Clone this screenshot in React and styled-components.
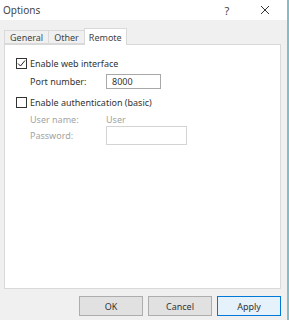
import React from 'react';
import styled, { createGlobalStyle } from 'styled-components';

const Global = createGlobalStyle`
  html, body {
    margin: 0;
    padding: 0;
    background: #f0f0f0;
  }
  * {
    box-sizing: border-box;
  }
`;

const Window = styled.div`
  width: 289px;
  height: 320px;
  display: flex;
  flex-direction: column;
  background: #f0f0f0;
  border-right: 2px solid #86bcc6;
  font-family: "Noto Sans", "Open Sans", sans-serif;
  font-size: 9px;
  color: #333;
  overflow: hidden;
`;

const TitleBar = styled.div`
  height: 20px;
  flex-shrink: 0;
  background: #ffffff;
  display: flex;
  align-items: center;
  padding-left: 3px;
  font-size: 10px;
  color: #444;
`;

const Title = styled.span`
  flex: 1;
`;

const HelpButton = styled.span`
  width: 12px;
  margin-right: 22px;
  text-align: center;
  font-size: 11px;
  color: #444;
`;

const CloseButton = styled.span`
  width: 20px;
  margin-right: 12px;
  display: flex;
  justify-content: center;
`;

const TabStrip = styled.div`
  display: flex;
  align-items: flex-end;
  height: 24px;
  padding-left: 4px;
  flex-shrink: 0;
`;

const Tab = styled.div`
  height: ${p => (p.$active ? 17 : 14)}px;
  margin-bottom: ${p => (p.$active ? -1 : 0)}px;
  padding: 0 ${p => (p.$active ? 4 : 5)}px;
  display: flex;
  align-items: center;
  background: ${p => (p.$active ? '#ffffff' : '#f0f0f0')};
  border: 1px solid #d9d9d9;
  border-bottom: ${p => (p.$active ? 'none' : '1px solid #d9d9d9')};
  margin-left: -1px;
  position: relative;
  z-index: ${p => (p.$active ? 1 : 0)};
  color: #444;
  &:first-child {
    margin-left: 0;
  }
`;

const Panel = styled.div`
  flex: 1;
  margin: 0 6px 0 4px;
  background: #ffffff;
  border: 1px solid #d9d9d9;
  padding: 11px 0 0 11px;
  display: flex;
  flex-direction: column;
`;

const CheckRow = styled.label`
  display: flex;
  align-items: center;
  height: 14px;
  margin-bottom: ${p => p.$gap || 0}px;
  gap: 3px;
`;

const Box = styled.span`
  width: 11px;
  height: 11px;
  border: 1px solid #333;
  background: #fff;
  display: flex;
  align-items: center;
  justify-content: center;
`;

const FieldRow = styled.div`
  display: grid;
  grid-template-columns: 76px auto;
  align-items: center;
  padding-left: 14px;
  height: ${p => p.$h}px;
  margin-bottom: ${p => p.$gap || 0}px;
  color: ${p => (p.$disabled ? '#a3a3a3' : '#333')};
`;

const TextBox = styled.div`
  width: ${p => p.$w}px;
  height: ${p => p.$h}px;
  border: 1px solid ${p => (p.$disabled ? '#d4d4d4' : '#a8a8a8')};
  background: #fff;
  padding-left: 5px;
  display: flex;
  align-items: center;
`;

const ButtonRow = styled.div`
  height: 31px;
  flex-shrink: 0;
  display: flex;
  justify-content: flex-end;
  align-items: center;
  gap: 5px;
  padding: 3px 6px 0 0;
`;

const Button = styled.div`
  width: 64px;
  height: 20px;
  display: flex;
  align-items: center;
  justify-content: center;
  background: ${p => (p.$primary ? '#e5f1fb' : '#e1e1e1')};
  border: 1px solid ${p => (p.$primary ? '#0078d7' : '#adadad')};
  color: #333;
`;

const Check = () => (
  <svg width="9" height="9" viewBox="0 0 9 9">
    <path d="M1 4.5 L3.5 7 L8 1.5" fill="none" stroke="#222" strokeWidth="1" />
  </svg>
);

const CloseIcon = () => (
  <svg width="10" height="10" viewBox="0 0 10 10">
    <path d="M1 1 L9 9 M9 1 L1 9" fill="none" stroke="#333" strokeWidth="1" />
  </svg>
);

export default function App() {
  return (
    <>
      <Global />
      <Window>
        <TitleBar>
          <Title>Options</Title>
          <HelpButton>?</HelpButton>
          <CloseButton><CloseIcon /></CloseButton>
        </TitleBar>
        <TabStrip>
          <Tab>General</Tab>
          <Tab>Other</Tab>
          <Tab $active>Remote</Tab>
        </TabStrip>
        <Panel>
          <CheckRow $gap={3}>
            <Box><Check /></Box>
            Enable web interface
          </CheckRow>
          <FieldRow $h={16} $gap={6}>
            <span>Port number:</span>
            <TextBox $w={55} $h={15}>8000</TextBox>
          </FieldRow>
          <CheckRow $gap={3}>
            <Box />
            Enable authentication (basic)
          </CheckRow>
          <FieldRow $disabled $h={14}>
            <span>User name:</span>
            <span>User</span>
          </FieldRow>
          <FieldRow $disabled $h={19}>
            <span>Password:</span>
            <TextBox $disabled $w={81} $h={19} />
          </FieldRow>
        </Panel>
        <ButtonRow>
          <Button>OK</Button>
          <Button>Cancel</Button>
          <Button $primary>Apply</Button>
        </ButtonRow>
      </Window>
    </>
  );
}
